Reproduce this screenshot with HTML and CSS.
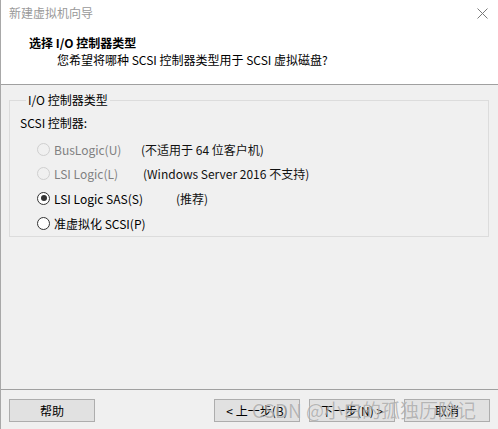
FILE: index.html
```html
<!DOCTYPE html>
<html lang="zh">
<head>
<meta charset="utf-8">
<link rel="stylesheet" href="styles.css">
</head>
<body>
<div class="window">
  <div class="header">
    <div class="titlebar">
      <span class="title">新建虚拟机向导</span>
      <svg class="close" width="11" height="11" viewBox="0 0 11 11"><path d="M0.5 0.5 L10.5 10.5 M10.5 0.5 L0.5 10.5" stroke="#7a7a7a" stroke-width="1" fill="none"/></svg>
    </div>
    <div class="heading">选择 I/O 控制器类型</div>
    <div class="subheading">您希望将哪种 SCSI 控制器类型用于 SCSI 虚拟磁盘?</div>
  </div>
  <div class="main">
    <fieldset class="group">
      <legend>I/O 控制器类型</legend>
      <div class="label">SCSI 控制器:</div>
      <div class="row disabled">
        <span class="radio"></span><span class="opt">BusLogic(U)</span><span class="note">(不适用于 64 位客户机)</span>
      </div>
      <div class="row disabled second">
        <span class="radio"></span><span class="opt">LSI Logic(L)</span><span class="note">(Windows Server 2016 不支持)</span>
      </div>
      <div class="row">
        <span class="radio checked"></span><span class="opt">LSI Logic SAS(S)</span><span class="note rec">(推荐)</span>
      </div>
      <div class="row">
        <span class="radio"></span><span class="opt">准虚拟化 SCSI(P)</span>
      </div>
    </fieldset>
  </div>
  <div class="footer">
    <button class="btn">帮助</button>
    <div class="spacer"></div>
    <button class="btn">&lt; 上一步(B)</button>
    <button class="btn">下一步(N) &gt;</button>
    <button class="btn">取消</button>
  </div>
  <div class="watermark">CSDN @小白的孤独历险记</div>
</div>
</body>
</html>
```

FILE: styles.css
```css
* { box-sizing: border-box; }
html, body { margin: 0; padding: 0; }
body {
  width: 498px;
  height: 429px;
  overflow: hidden;
  font-family: "Noto Sans CJK SC", "Microsoft YaHei", sans-serif;
  font-size: 12px;
  color: #000;
}
.window {
  position: relative;
  width: 498px;
  height: 429px;
  background: #f0f0f0;
  border-left: 1px solid #a8a8a8;
  display: flex;
  flex-direction: column;
}
.header {
  background: #fff;
  height: 85px;
  border-bottom: 1px solid #a0a0a0;
  flex: none;
}
.titlebar {
  height: 26px;
  display: flex;
  align-items: center;
  justify-content: space-between;
  padding: 0 10px 0 8px;
}
.title {
  color: #999;
  line-height: 16px;
  margin-top: -1px;
}
.heading {
  font-weight: bold;
  line-height: 16px;
  margin-top: 9px;
  padding-left: 28px;
}
.subheading {
  line-height: 16px;
  margin-top: 1px;
  padding-left: 56px;
}
.main {
  flex: 1;
  padding: 7px 9px 0 8px;
}
.group {
  margin: 0;
  padding: 0 0 3px 10px;
  border: 1px solid #dcdcdc;
  height: 145px;
}
.group legend {
  padding: 0 2px;
  margin-left: 6px;
  line-height: 16px;
}
.label {
  line-height: 16px;
  margin-top: 7px;
  margin-bottom: 6px;
}
.row {
  display: flex;
  align-items: center;
  height: 24.6px;
  padding-left: 17px;
  white-space: nowrap;
}
.radio {
  width: 13px;
  height: 13px;
  border-radius: 50%;
  border: 1px solid #333;
  background: #fff;
  flex: none;
  position: relative;
}
.radio.checked::after {
  content: "";
  position: absolute;
  left: 2.5px;
  top: 2.5px;
  width: 6px;
  height: 6px;
  border-radius: 50%;
  background: #333;
}
.disabled .radio { border-color: #cfcfcf; background: #f0f0f0; }
.disabled .opt { color: #808080; }
.opt {
  margin-left: 4px;
  min-width: 87px;
  flex: none;
}
.note { color: #111; }
.second .note { margin-left: 2px; }
.note.rec { margin-left: 33px; }
.footer {
  flex: none;
  height: 40px;
  border-top: 1px solid #a0a0a0;
  display: flex;
  align-items: flex-start;
  padding: 9px 8px 0 8px;
  gap: 9px;
}
.spacer { flex: 1; }
.btn {
  width: 86px;
  height: 23px;
  font: inherit;
  background: #e1e1e1;
  border: 1px solid #adadad;
  padding: 0;
  color: #000;
  line-height: 20px;
}
.watermark {
  position: absolute;
  left: 251px;
  top: 398px;
  font-size: 19px;
  line-height: 24px;
  color: rgba(120, 120, 120, 0.5);
  white-space: nowrap;
  text-shadow: 0 0 1px rgba(255,255,255,0.7);
}
```
